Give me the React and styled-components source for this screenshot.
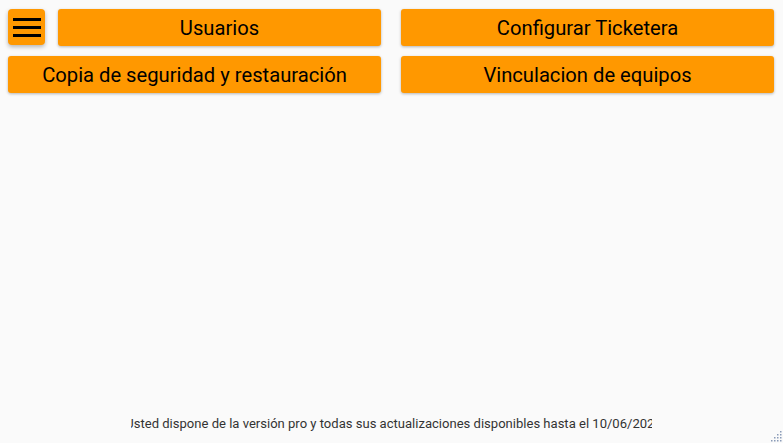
import React from 'react'
import styled, { createGlobalStyle } from 'styled-components'

const Global = createGlobalStyle`
  html, body {
    margin: 0;
    padding: 0;
    background: #fafafa;
    font-family: Roboto, "Liberation Sans", sans-serif;
  }
`

const Page = styled.div`
  position: relative;
  height: 443px;
  display: flex;
  flex-direction: column;
  box-sizing: border-box;
  padding: 9px 9px 0 8px;
`

const Grid = styled.div`
  display: grid;
  grid-template-columns: 373px 373px;
  column-gap: 20px;
  row-gap: 10px;
`

const Cell = styled.div`
  display: flex;
  gap: 13px;
`

const MenuButton = styled.button`
  width: 37px;
  height: 36px;
  padding: 0;
  border: none;
  border-radius: 4px;
  background: #ff9800;
  box-shadow: 0 2px 4px rgba(0, 0, 0, 0.28);
  display: flex;
  align-items: center;
  justify-content: center;
`

const OrangeButton = styled.button`
  flex: 1;
  height: 37px;
  border: none;
  border-radius: 3px;
  background: #ff9800;
  color: #000;
  font-family: Roboto, "Liberation Sans", sans-serif;
  font-size: 20.2px;
  font-weight: 400;
  box-shadow: 0 1px 3px rgba(0, 0, 0, 0.28);
  display: flex;
  align-items: center;
  justify-content: center;
  padding: 0;
`

const Spacer = styled.div`
  flex: 1;
`

const Footer = styled.div`
  width: 521px;
  margin: 0 auto 11px;
  display: flex;
  justify-content: center;
  overflow: hidden;
  white-space: nowrap;
  font-size: 13.05px;
  line-height: 16px;
  color: #333;
`

const FooterText = styled.span`
  flex-shrink: 0;
  margin-left: 5px;
`

const Grip = styled.svg`
  position: absolute;
  right: 1px;
  bottom: 1px;
`

function Hamburger() {
  return (
    <svg width="28" height="22" viewBox="0 0 28 22">
      <rect x="0" y="2" width="28" height="3" fill="#000" />
      <rect x="0" y="10" width="28" height="3" fill="#000" />
      <rect x="0" y="18" width="28" height="3" fill="#000" />
    </svg>
  )
}

export default function App() {
  const dots = [
    [10, 1], [10, 4], [7, 4], [10, 7], [7, 7], [4, 7], [10, 10], [7, 10], [4, 10], [1, 10],
  ]
  return (
    <>
      <Global />
      <Page>
        <Grid>
          <Cell>
            <MenuButton><Hamburger /></MenuButton>
            <OrangeButton>Usuarios</OrangeButton>
          </Cell>
          <Cell>
            <OrangeButton>Configurar Ticketera</OrangeButton>
          </Cell>
          <Cell>
            <OrangeButton>Copia de seguridad y restauración</OrangeButton>
          </Cell>
          <Cell>
            <OrangeButton>Vinculacion de equipos</OrangeButton>
          </Cell>
        </Grid>
        <Spacer />
        <Footer>
          <FooterText>Usted dispone de la versión pro y todas sus actualizaciones disponibles hasta el 10/06/2025</FooterText>
        </Footer>
        <Grip width="12" height="12" viewBox="0 0 12 12">
          {dots.map(([x, y]) => (
            <rect key={x + '-' + y} x={x} y={y} width="1.5" height="1.5" fill="#8a9bb8" />
          ))}
        </Grip>
      </Page>
    </>
  )
}
